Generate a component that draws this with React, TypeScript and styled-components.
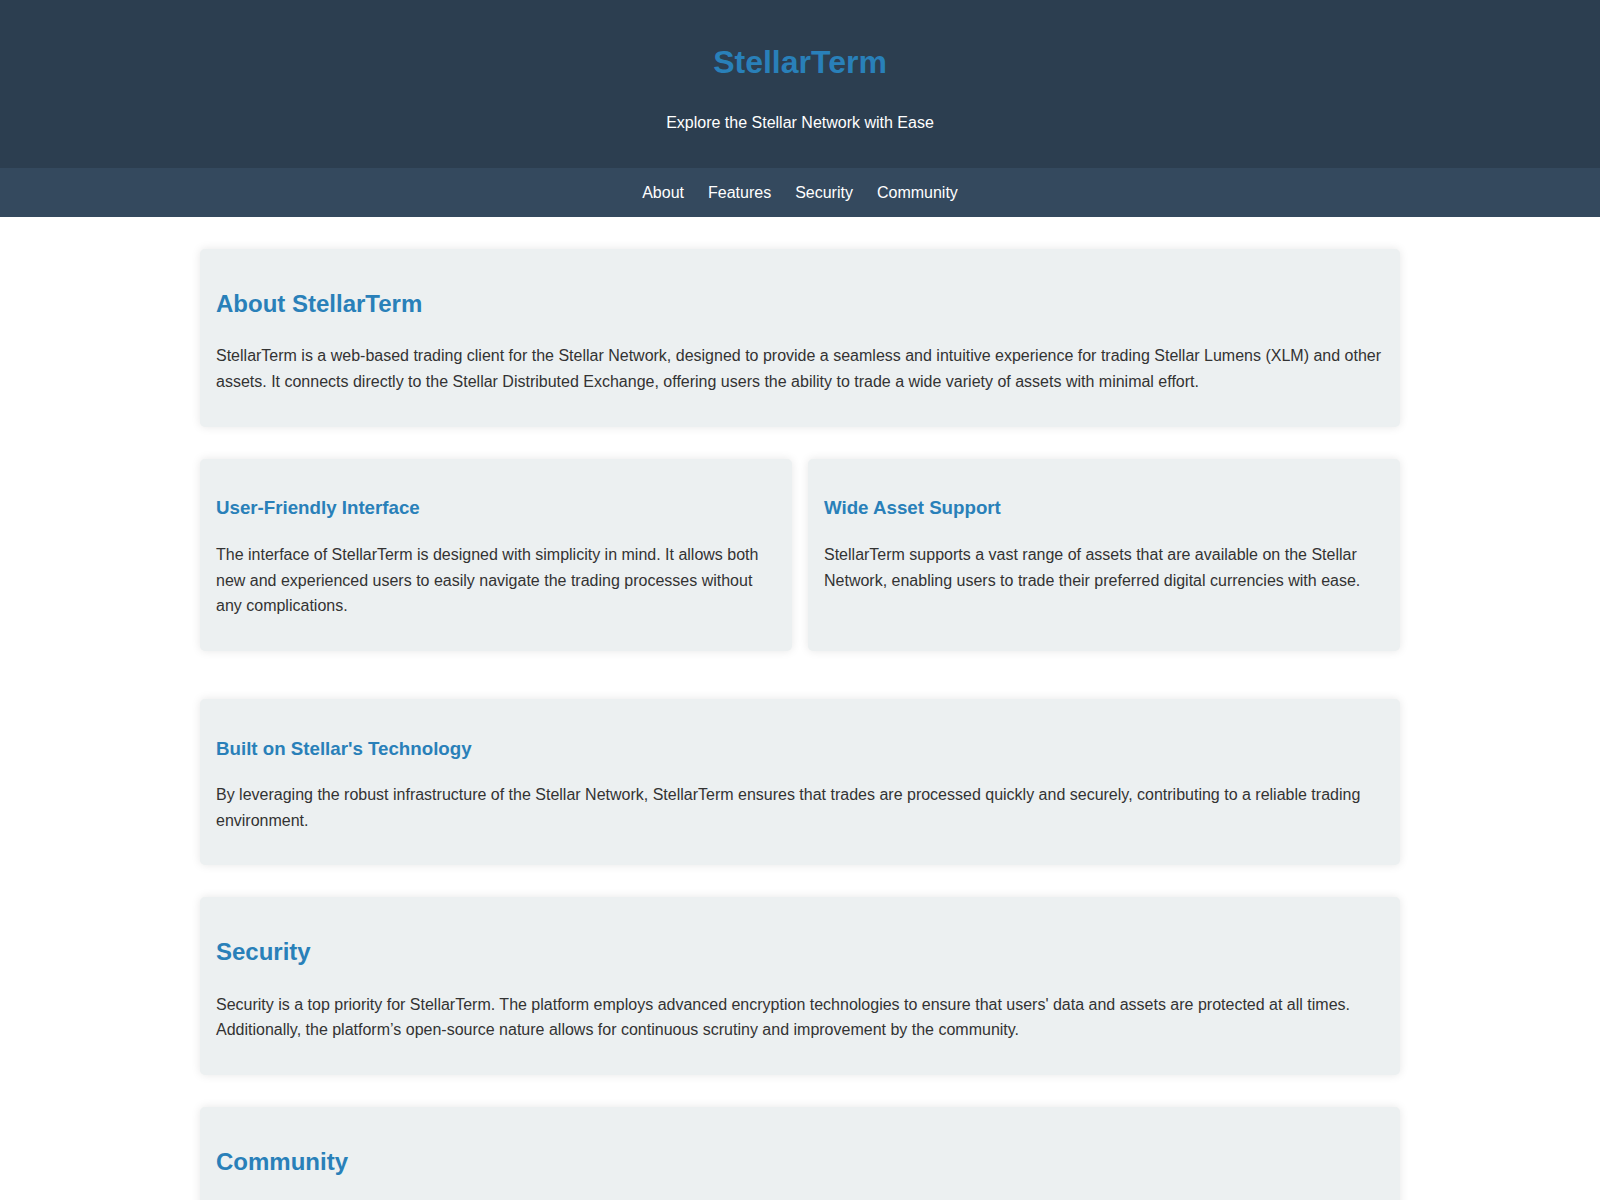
import { createGlobalStyle, styled } from 'styled-components';

const GlobalStyle = createGlobalStyle`
    body {
        margin: 0;
        font-family: Arial, "Liberation Sans", sans-serif;
        line-height: 1.6;
        color: #333;
        background-color: #fff;
    }
`;

const Header = styled.header`
    background-color: #2c3e50;
    color: #ecf0f1;
    text-align: center;
    padding: 16px 0;
`;

const Title = styled.h1`
    color: #2980b9;
    font-size: 32px;
    margin: 21.44px 0;
`;

const Tagline = styled.p`
    margin: 16px 0;
    font-size: 16px;
    color: #fff;
`;

const Nav = styled.nav`
    background-color: #34495e;
    padding: 12px 0;
    display: flex;
    justify-content: center;
    gap: 24px;
`;

const NavLink = styled.a`
    color: #fff;
    text-decoration: none;
    font-size: 16px;
`;

const Main = styled.main`
    max-width: 1200px;
    margin: 32px auto;
`;

const Card = styled.section<{ $gap?: number }>`
    background-color: #ecf0f1;
    padding: 16px;
    border-radius: 5px;
    box-shadow: 0 0 10px rgba(0, 0, 0, 0.1);
    margin-bottom: ${p => p.$gap ?? 32}px;
`;

const SectionTitle = styled.h2`
    color: #2980b9;
    font-size: 24px;
    margin: 19.92px 0;
`;

const FeatureTitle = styled.h3`
    color: #2980b9;
    font-size: 18.72px;
    margin: 18.72px 0;
`;

const Text = styled.p`
    margin: 16px 0;
    font-size: 16px;
`;

const FeatureGrid = styled.div`
    display: grid;
    grid-template-columns: 1fr 1fr;
    gap: 16px;
    margin-bottom: 48px;
`;

const features = [
    {
        title: 'User-Friendly Interface',
        text: 'The interface of StellarTerm is designed with simplicity in mind. It allows both new and experienced users to easily navigate the trading processes without any complications.',
    },
    {
        title: 'Wide Asset Support',
        text: 'StellarTerm supports a vast range of assets that are available on the Stellar Network, enabling users to trade their preferred digital currencies with ease.',
    },
];

export default function App() {
    return (
        <>
            <GlobalStyle />
            <Header>
                <Title>StellarTerm</Title>
                <Tagline>Explore the Stellar Network with Ease</Tagline>
            </Header>
            <Nav>
                <NavLink href="#about">About</NavLink>
                <NavLink href="#features">Features</NavLink>
                <NavLink href="#security">Security</NavLink>
                <NavLink href="#community">Community</NavLink>
            </Nav>
            <Main>
                <Card id="about">
                    <SectionTitle>About StellarTerm</SectionTitle>
                    <Text>
                        StellarTerm is a web-based trading client for the Stellar Network, designed to provide a seamless and intuitive experience for trading Stellar Lumens (XLM) and other assets. It connects directly to the Stellar Distributed Exchange, offering users the ability to trade a wide variety of assets with minimal effort.
                    </Text>
                </Card>
                <FeatureGrid id="features">
                    {features.map(f => (
                        <Card key={f.title} $gap={0}>
                            <FeatureTitle>{f.title}</FeatureTitle>
                            <Text>{f.text}</Text>
                        </Card>
                    ))}
                </FeatureGrid>
                <Card>
                    <FeatureTitle>Built on Stellar's Technology</FeatureTitle>
                    <Text>
                        By leveraging the robust infrastructure of the Stellar Network, StellarTerm ensures that trades are processed quickly and securely, contributing to a reliable trading environment.
                    </Text>
                </Card>
                <Card id="security">
                    <SectionTitle>Security</SectionTitle>
                    <Text>
                        Security is a top priority for StellarTerm. The platform employs advanced encryption technologies to ensure that users' data and assets are protected at all times. Additionally, the platform’s open-source nature allows for continuous scrutiny and improvement by the community.
                    </Text>
                </Card>
                <Card id="community">
                    <SectionTitle>Community</SectionTitle>
                    <Text>
                        StellarTerm is supported by an active community of developers and traders who contribute to its growth. Join the conversation and help shape the future of decentralized trading on the Stellar Network.
                    </Text>
                </Card>
            </Main>
        </>
    );
}
